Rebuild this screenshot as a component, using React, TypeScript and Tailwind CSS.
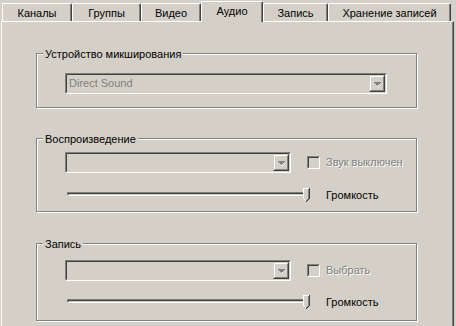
import React from "react";

const font = { fontFamily: '"Liberation Sans", Arial, sans-serif' };

function Tab({ label, w, selected }: { label: string; w: number; selected?: boolean }) {
  if (selected) {
    return (
      <div
        className="relative z-10 mb-[-1px] flex h-[21px] shrink-0 items-start justify-center border-l border-t border-r border-l-white border-t-white border-r-[#404040] bg-[#d4d0c8] pt-[3px] shadow-[inset_-1px_0_0_#808080] rounded-tl-[2px] rounded-tr-[2px]"
        style={{ width: w }}
      >
        <span className="text-[11px] leading-[13px] text-black">{label}</span>
      </div>
    );
  }
  return (
    <div
      className="flex h-[18px] shrink-0 items-start justify-center border-l border-t border-r border-l-white border-t-white border-r-[#404040] bg-[#d4d0c8] pt-[3px] shadow-[inset_-1px_0_0_#808080] rounded-tl-[2px] rounded-tr-[2px]"
      style={{ width: w }}
    >
      <span className="text-[11px] leading-[13px] text-black">{label}</span>
    </div>
  );
}

function Arrow() {
  return (
    <svg width="7" height="5" viewBox="0 0 7 5" shapeRendering="crispEdges">
      <path d="M0 0h7v1H0z M1 1h5v1H1z M2 2h3v1H2z M3 3h1v1H3z" fill="#808080" />
      <path d="M4 3h1v1H4z M3 4h1v1H3z" fill="#ffffff" />
    </svg>
  );
}

function Combo({ w, text }: { w: number; text?: string }) {
  return (
    <div
      className="h-[21px] shrink-0 border-l border-t border-r border-b border-l-[#808080] border-t-[#808080] border-r-white border-b-white"
      style={{ width: w }}
    >
      <div className="flex h-full w-full items-center border-l border-t border-r border-b border-l-[#404040] border-t-[#404040] border-r-[#d4d0c8] border-b-[#d4d0c8] bg-[#d4d0c8]">
        <div className="flex-1 pl-[2px] text-[11px] leading-[13px] text-[#808080]">{text}</div>
        <div className="h-[17px] w-[16px] border-l border-t border-r border-b border-l-[#d4d0c8] border-t-[#d4d0c8] border-r-[#404040] border-b-[#404040]">
          <div className="flex h-full w-full items-center justify-center border-l border-t border-r border-b border-l-white border-t-white border-r-[#808080] border-b-[#808080] pt-[1px]">
            <Arrow />
          </div>
        </div>
      </div>
    </div>
  );
}

function Check({ label }: { label: string }) {
  return (
    <div className="flex items-center">
      <div className="h-[13px] w-[13px] border-l border-t border-r border-b border-l-[#808080] border-t-[#808080] border-r-white border-b-white">
        <div className="h-full w-full border-l border-t border-r border-b border-l-[#404040] border-t-[#404040] border-r-[#d4d0c8] border-b-[#d4d0c8] bg-[#d4d0c8]" />
      </div>
      <span className="ml-[6px] text-[11px] leading-[13px] text-[#808080] [text-shadow:1px_1px_0_#ffffff]">{label}</span>
    </div>
  );
}

function Thumb() {
  return (
    <svg width="7" height="14" viewBox="0 0 7 14" shapeRendering="crispEdges">
      <path d="M0 0h7v10l-3 4l-4-4z" fill="#d4d0c8" />
      <path d="M0 0h6v1H0z M0 1h1v10H0z M1 11h1v1H1z M2 12h1v1H2z" fill="#ffffff" />
      <path d="M6 0h1v11H6z M5 11h1v1H5z M4 12h1v1H4z M3 13h1v1H3z" fill="#404040" />
      <path d="M5 1h1v10H5z M4 11h1v1H4z M3 12h1v1H3z" fill="#808080" />
    </svg>
  );
}

function Slider() {
  return (
    <div className="flex items-center">
      <div className="relative h-[14px] w-[245px]">
        <div className="absolute left-[2px] top-[4px] h-[4px] w-[240px] border-l border-t border-r border-b border-l-[#808080] border-t-[#808080] border-r-white border-b-white">
          <div className="h-full w-full border-l border-t border-r border-b border-l-[#404040] border-t-[#404040] border-r-[#d4d0c8] border-b-[#d4d0c8]" />
        </div>
        <div className="absolute left-[238px] top-0">
          <Thumb />
        </div>
      </div>
      <span className="ml-[16px] text-[11px] leading-[13px] text-black">Громкость</span>
    </div>
  );
}

function Group({ title, h, pt, children }: { title: string; h: number; pt: number; children: React.ReactNode }) {
  return (
    <div
      className="relative ml-[34px] w-[381px] border border-[#808080] shadow-[inset_1px_1px_0_#ffffff,1px_1px_0_#ffffff]"
      style={{ height: h, paddingTop: pt }}
    >
      <span className="absolute left-[6px] top-[-6px] bg-[#d4d0c8] px-[2px] text-[11px] leading-[13px] text-black">
        {title}
      </span>
      {children}
    </div>
  );
}

export default function App() {
  return (
    <div className="h-[326px] w-[456px] overflow-hidden bg-[#d4d0c8]" style={font}>
      <div className="flex h-[21px] items-end pl-[2px]">
        <Tab label="Каналы" w={70} />
        <Tab label="Группы" w={69} />
        <Tab label="Видео" w={60} />
        <Tab label="Аудио" w={62} selected />
        <Tab label="Запись" w={65} />
        <Tab label="Хранение записей" w={123} />
      </div>
      <div className="ml-[1px] h-[320px] w-[453px] border-l border-t border-r border-l-white border-t-white border-r-[#404040] shadow-[inset_-1px_0_0_#808080]">
        <div className="flex flex-col pt-[31px]">
          <Group title="Устройство микширования" h={55} pt={19}>
            <div className="pl-[28px]">
              <Combo w={322} text="Direct Sound" />
            </div>
          </Group>
          <div className="h-[30px]" />
          <Group title="Воспроизведение" h={74} pt={13}>
            <div className="flex flex-col gap-[15px] pl-[28px]">
              <div className="flex items-center">
                <Combo w={226} />
                <div className="ml-[16px]">
                  <Check label="Звук выключен" />
                </div>
              </div>
              <Slider />
            </div>
          </Group>
          <div className="h-[31px]" />
          <Group title="Запись" h={78} pt={16}>
            <div className="flex flex-col gap-[14px] pl-[28px]">
              <div className="flex items-center">
                <Combo w={226} />
                <div className="ml-[16px]">
                  <Check label="Выбрать" />
                </div>
              </div>
              <Slider />
            </div>
          </Group>
        </div>
      </div>
    </div>
  );
}
